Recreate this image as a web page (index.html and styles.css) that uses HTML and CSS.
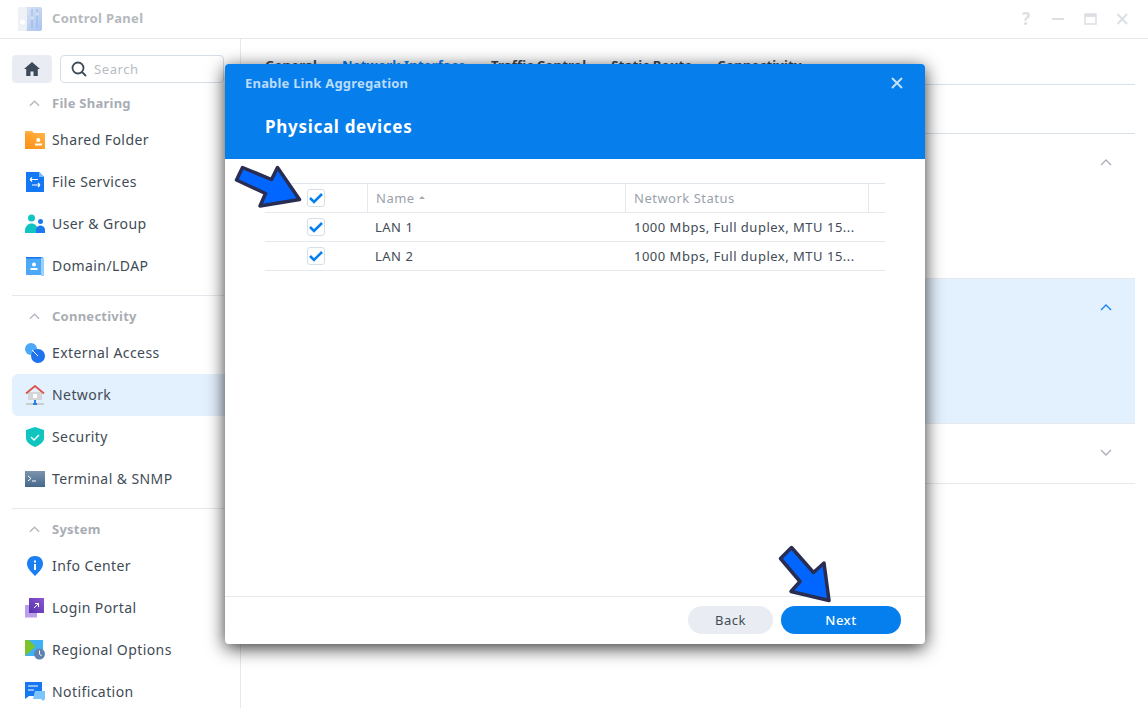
FILE: index.html
```html
<!DOCTYPE html>
<html lang="en">
<head>
<meta charset="utf-8">
<title>Control Panel</title>
<link rel="stylesheet" href="styles.css">
</head>
<body>
<div class="window">
  <header class="titlebar">
    <svg class="app-icon" width="24" height="24" viewBox="0 0 24 24">
      <defs><linearGradient id="ap" x1="0" y1="0" x2="1" y2="1"><stop offset="0" stop-color="#e3e9f3"/><stop offset="1" stop-color="#a9c3f0"/></linearGradient></defs>
      <rect x="0" y="0" width="24" height="24" rx="2" fill="url(#ap)"/>
      <rect x="0" y="0" width="9" height="24" rx="2" fill="#eef1f5"/>
      <path d="M14 2v19M19 2v19" stroke="#8fb6e8" stroke-width="1"/>
      <circle cx="14" cy="11" r="1.7" fill="#cfe0f7"/><circle cx="19" cy="7" r="1.7" fill="#cfe0f7"/>
      <circle cx="4.500" cy="15" r="2.500" fill="#fff"/>
    </svg>
    <span class="app-title">Control Panel</span>
    <div class="win-controls">
      <span class="win-help">?</span>
      <svg width="14" height="14" viewBox="0 0 14 14"><path d="M1 7h12" stroke="#dcdfe3" stroke-width="2"/></svg>
      <svg width="14" height="14" viewBox="0 0 14 14"><path d="M2 2h11v10H2z" fill="none" stroke="#dcdfe3" stroke-width="1.500"/><path d="M2 3.500h11" stroke="#dcdfe3" stroke-width="3"/></svg>
      <svg width="14" height="14" viewBox="0 0 14 14"><path d="M2.500 2l9.500 10M12 2L2.500 12" stroke="#dcdfe3" stroke-width="2"/></svg>
    </div>
  </header>
  <div class="body">
    <aside class="sidebar">
      <div class="side-top">
        <button class="home-btn">
          <svg width="16" height="14" viewBox="0 0 16 14"><path d="M8 0L0 7h2.200v7h4.300V9.500h3V14h4.300V7H16z" fill="#3e4a57"/></svg>
        </button>
        <div class="search">
          <svg width="16" height="16" viewBox="0 0 16 16"><circle cx="7" cy="7" r="5.500" fill="none" stroke="#3e4a57" stroke-width="1.800"/><path d="M11 11l4 4" stroke="#3e4a57" stroke-width="1.800"/></svg>
          <span>Search</span>
        </div>
      </div>
      <section class="group">
        <div class="group-head"><svg class="chev" width="14" height="8" viewBox="0 0 14 8"><path d="M2 7l5-5 5 5" fill="none" stroke="#b3b9c1" stroke-width="1.500"/></svg><span>File Sharing</span></div>
        <div class="item">
          <svg class="ico" width="20" height="20" viewBox="0 0 20 20"><defs><linearGradient id="fo" x1="1" y1="0" x2="0" y2="1"><stop offset="0" stop-color="#ffb347"/><stop offset="1" stop-color="#fd8f12"/></linearGradient></defs><path d="M0 1h7l2 2.500H0z" fill="#fbb24a"/><rect x="0" y="3" width="20" height="16" fill="url(#fo)"/><circle cx="13.300" cy="10" r="2" fill="#fff"/><path d="M10 15.500v-2h7v2z" fill="#fff"/></svg>
          <span>Shared Folder</span>
        </div>
        <div class="item">
          <svg class="ico" width="20" height="20" viewBox="0 0 20 20"><path d="M1 0h13l5 5v15H1z" fill="#1478f5"/><path d="M14 0l5 5h-5z" fill="#7cb8fb"/><path d="M5 7.500h8M5 7.500l2-2M5 7.500l2 2M15 13H7M15 13l-2-2M15 13l-2 2" stroke="#fff" stroke-width="1.100" fill="none"/></svg>
          <span>File Services</span>
        </div>
        <div class="item">
          <svg class="ico" width="20" height="20" viewBox="0 0 20 20"><circle cx="6.500" cy="4" r="3.500" fill="#12c4c1"/><path d="M0 17c0-10 13-10 13 0v2H0z" fill="#12c4c1"/><circle cx="15.500" cy="7.500" r="2.500" fill="#1e78f0"/><path d="M11 19v-3c0-6 9-6 9 0v3z" fill="#1e78f0"/></svg>
          <span>User &amp; Group</span>
        </div>
        <div class="item">
          <svg class="ico" width="20" height="20" viewBox="0 0 20 20"><rect x="1" y="1" width="17" height="18" fill="#4ba9f8"/><rect x="1" y="1" width="15" height="1.500" fill="#1b74e8"/><rect x="16" y="2" width="3" height="18" fill="#9ad0fb"/><circle cx="9" cy="8.500" r="2" fill="#fff"/><path d="M5.500 14v-2h7v2z" fill="#fff"/></svg>
          <span>Domain/LDAP</span>
        </div>
      </section>
      <section class="group">
        <div class="group-head"><svg class="chev" width="14" height="8" viewBox="0 0 14 8"><path d="M2 7l5-5 5 5" fill="none" stroke="#b3b9c1" stroke-width="1.500"/></svg><span>Connectivity</span></div>
        <div class="item">
          <svg class="ico" width="20" height="20" viewBox="0 0 20 20"><circle cx="6" cy="6" r="6" fill="#4ba9f8"/><circle cx="13" cy="13" r="7" fill="#1f72ee"/><path d="M7 7l6 6" stroke="#fff" stroke-width="1"/></svg>
          <span>External Access</span>
        </div>
        <div class="item active">
          <svg class="ico" width="20" height="20" viewBox="0 0 20 20"><path d="M3 7h14v8H3z" fill="#d3d5d8"/><path d="M1 8.500L10 1l9 7.500" fill="none" stroke="#d9534a" stroke-width="1.800"/><rect x="8" y="9" width="4" height="4" fill="#fff"/><path d="M10 15v3" stroke="#2d7fe0" stroke-width="2"/><rect x="1" y="18" width="18" height="2" fill="#c8cdd2"/><rect x="8" y="18" width="4" height="2" fill="#2d7fe0"/></svg>
          <span>Network</span>
        </div>
        <div class="item">
          <svg class="ico" width="20" height="20" viewBox="0 0 20 20"><path d="M10 0l9 3v8c0 4-4 7-9 9-5-2-9-5-9-9V3z" fill="#10c5bf"/><path d="M6 10l3 3 5-5" fill="none" stroke="#fff" stroke-width="1.400"/></svg>
          <span>Security</span>
        </div>
        <div class="item">
          <svg class="ico" width="20" height="16" viewBox="0 0 20 16"><defs><linearGradient id="tm" x1="0" y1="0" x2="0" y2="1"><stop offset="0" stop-color="#7d95ad"/><stop offset="1" stop-color="#44688d"/></linearGradient></defs><rect width="20" height="16" fill="url(#tm)"/><path d="M3 5l3 2.500L3 10M7 10h4" fill="none" stroke="#fff" stroke-width="1"/></svg>
          <span>Terminal &amp; SNMP</span>
        </div>
      </section>
      <section class="group">
        <div class="group-head"><svg class="chev" width="14" height="8" viewBox="0 0 14 8"><path d="M2 7l5-5 5 5" fill="none" stroke="#b3b9c1" stroke-width="1.500"/></svg><span>System</span></div>
        <div class="item">
          <svg class="ico" width="20" height="20" viewBox="0 0 20 20"><path d="M10 0c5 0 8 3.500 8 8 0 4-4 8-8 12-4-4-8-8-8-12 0-4.500 3-8 8-8z" fill="#1a7ff3"/><rect x="9" y="8" width="2" height="6" fill="#fff"/><rect x="9" y="4.500" width="2" height="2" fill="#fff"/></svg>
          <span>Info Center</span>
        </div>
        <div class="item">
          <svg class="ico" width="20" height="20" viewBox="0 0 20 20"><defs><linearGradient id="lp" x1="1" y1="0" x2="0" y2="1"><stop offset="0" stop-color="#8d57cf"/><stop offset="1" stop-color="#5531ae"/></linearGradient></defs><rect x="0" y="7" width="12" height="12.500" fill="#bb9fe8"/><rect x="4" y="0" width="15" height="15" fill="url(#lp)"/><path d="M9 10l4.500-4.500M10 5.500h3.500V9" fill="none" stroke="#fff" stroke-width="1"/></svg>
          <span>Login Portal</span>
        </div>
        <div class="item">
          <svg class="ico" width="20" height="20" viewBox="0 0 20 20"><rect width="18" height="16" y="0" fill="#3fb1f5"/><path d="M0 0h18L0 16z" fill="#7cc22a"/><path d="M4 0l9 9 5-6V0z" fill="#3fb1f5"/><circle cx="14.500" cy="14" r="5.500" fill="#6083ad"/><path d="M14.500 10.500V14l2 2" fill="none" stroke="#fff" stroke-width="1"/></svg>
          <span>Regional Options</span>
        </div>
        <div class="item">
          <svg class="ico" width="20" height="20" viewBox="0 0 20 20"><path d="M0 0h17v14H4l-4 3z" fill="#1677f0"/><path d="M3 4h10M3 8h6" stroke="#fff" stroke-width="1.200"/><path d="M10 9h10v8l-2 2-2-2h-8z" fill="#7cc4fb"/></svg>
          <span>Notification</span>
        </div>
      </section>
    </aside>
    <main class="content">
      <nav class="tabs">
        <span class="tab">General</span>
        <span class="tab current">Network Interface</span>
        <span class="tab">Traffic Control</span>
        <span class="tab">Static Route</span>
        <span class="tab">Connectivity</span>
      </nav>
      <div class="toolbar"></div>
      <div class="row row-a"><svg width="12" height="7" viewBox="0 0 12 7"><path d="M1 6l5-5 5 5" fill="none" stroke="#a9b0b9" stroke-width="1.400"/></svg></div>
      <div class="row row-b"><svg width="12" height="7" viewBox="0 0 12 7"><path d="M1 6l5-5 5 5" fill="none" stroke="#1a82f0" stroke-width="1.400"/></svg></div>
      <div class="row row-c"><svg width="12" height="7" viewBox="0 0 12 7"><path d="M1 1l5 5 5-5" fill="none" stroke="#a9b0b9" stroke-width="1.400"/></svg></div>
    </main>
  </div>
</div>

<div class="dialog">
  <div class="dlg-head">
    <div class="dlg-top">
      <span class="dlg-caption">Enable Link Aggregation</span>
      <svg width="12" height="12" viewBox="0 0 12 12"><path d="M1 1l10 10M11 1L1 11" stroke="#c4e0fb" stroke-width="2"/></svg>
    </div>
    <h1 class="dlg-title">Physical devices</h1>
  </div>
  <div class="dlg-body">
    <div class="grid">
      <div class="grid-row grid-header">
        <div class="c-check"><span class="cb"><svg width="14" height="12" viewBox="0 0 14 12"><path d="M1 6l4 4 8-8" fill="none" stroke="#057fee" stroke-width="2.500"/></svg></span></div>
        <div class="c-name">Name <i class="sort"></i></div>
        <div class="c-status">Network Status</div>
        <div class="c-rest"></div>
      </div>
      <div class="grid-row">
        <div class="c-check"><span class="cb"><svg width="14" height="12" viewBox="0 0 14 12"><path d="M1 6l4 4 8-8" fill="none" stroke="#057fee" stroke-width="2.500"/></svg></span></div>
        <div class="c-name">LAN 1</div>
        <div class="c-status">1000 Mbps, Full duplex, MTU 15...</div>
        <div class="c-rest"></div>
      </div>
      <div class="grid-row">
        <div class="c-check"><span class="cb"><svg width="14" height="12" viewBox="0 0 14 12"><path d="M1 6l4 4 8-8" fill="none" stroke="#057fee" stroke-width="2.500"/></svg></span></div>
        <div class="c-name">LAN 2</div>
        <div class="c-status">1000 Mbps, Full duplex, MTU 15...</div>
        <div class="c-rest"></div>
      </div>
    </div>
  </div>
  <div class="dlg-foot">
    <button class="btn btn-back">Back</button>
    <button class="btn btn-next">Next</button>
  </div>
</div>

<svg class="arrows" width="1148" height="708" viewBox="0 0 1148 708">
  <path d="M242.500 167.500L271.500 179.500L277.500 167.500L299.500 199.500L260 206L265.500 193.500L236.500 180Z" fill="#0066ff" stroke="#2a2d52" stroke-width="3.500" stroke-linejoin="round"/>
  <path d="M791.500 547.500L780.500 558.500L800 581.500L791 591.500L829 600.500L824 563L813.500 572.500Z" fill="#0066ff" stroke="#2a2d52" stroke-width="3.500" stroke-linejoin="round"/>
</svg>
</body>
</html>
```
FILE: styles.css
```css
* { box-sizing: border-box; }
html, body { margin: 0; height: 100%; }
body {
  width: 1148px; height: 708px; overflow: hidden; position: relative;
  background: #fff; color: #414b55;
  font-family: "Noto Sans", "DejaVu Sans", sans-serif; font-size: 14px;
  letter-spacing: .42px;
}
.window { display: flex; flex-direction: column; height: 708px; }
.titlebar {
  height: 39px; flex: none; display: flex; align-items: center;
  border-bottom: 1px solid #e5e9ee; padding: 0 19px 2px 18px;
}
.app-icon { margin-right: 10px; margin-top: 2px; }
.app-title { font-weight: 700; font-size: 13px; color: #b5b9be; letter-spacing: .3px; }
.win-controls { margin-left: auto; display: flex; align-items: center; gap: 18px; margin-top: 2px; }
.win-help { font-size: 17px; color: #dcdfe3; width: 14px; text-align: center; font-weight: 700; letter-spacing: 0; line-height: 14px; }
.body { flex: 1; display: flex; min-height: 0; }
.sidebar {
  width: 241px; flex: none; border-right: 1px solid #e5e9ee;
  padding: 16px 16px 0 12px; overflow: hidden;
}
.side-top { display: flex; gap: 8px; }
.home-btn {
  width: 40px; height: 28px; border: 0; border-radius: 4px; background: #e9edf3;
  display: flex; align-items: center; justify-content: center; padding: 0;
}
.search {
  flex: 1; height: 28px; border: 1px solid #d6dee6; border-radius: 4px;
  display: flex; align-items: center; gap: 7px; padding-left: 10px;
  color: #b6bcc3; font-size: 13px; letter-spacing: .6px;
}
.group { padding-top: 4px; margin-bottom: 8px; border-top: 1px solid #e5e9ee; }
.side-top + .group { border-top: 0; }
.group-head {
  height: 32px; display: flex; align-items: center;
  font-weight: 700; font-size: 13px; color: #a8adb4; letter-spacing: .25px;
}
.chev { margin: 0 11px 0 16px; width: 13px; }
.item {
  height: 42px; display: flex; align-items: center; border-radius: 6px;
  padding: 0 0 2px 13px; gap: 7px; color: #414b55;
}
.item .ico { flex: none; margin-top: 2px; }
.item.active { background: #e3f0fd; margin-right: -16px; }
.content { flex: 1; padding-right: 13px; min-width: 0; }
.tabs {
  height: 46px; display: flex; gap: 25px; padding: 17px 0 0 24px;
  border-bottom: 1px solid #d8e0e8; font-weight: 700; font-size: 13px; color: #3d4752; letter-spacing: .2px;
}
.tab.current { color: #057fee; }
.toolbar { height: 49px; border-bottom: 1px solid #d8e0e8; }
.row {
  display: flex; justify-content: flex-end; padding-right: 23px;
  border-bottom: 1px solid #e5e9ee;
}
.row-a { height: 145px; padding-top: 25px; }
.row-b { height: 145px; background: #e3f0fd; padding-top: 25px; }
.row-c { height: 60px; padding-top: 25px; }
.row svg { display: block; }

.dialog {
  position: absolute; left: 225px; top: 64px; width: 700px; height: 580px;
  background: #fff; border-radius: 4px;
  display: flex; flex-direction: column;
  box-shadow: 0 4px 18px rgba(0,0,0,.8);
}
.dlg-head {
  height: 95px; flex: none; background: #067eec; border-radius: 4px 4px 0 0;
  padding: 0 22px 0 20px;
}
.dlg-top { height: 39px; display: flex; align-items: center; justify-content: space-between; padding-bottom: 2px; }
.dlg-caption { font-weight: 700; font-size: 13px; color: #b9dcfb; letter-spacing: .2px; }
.dlg-title { margin: 12px 0 0 20px; font-size: 17px; font-weight: 700; color: #fff; line-height: 24px; letter-spacing: .7px; }
.dlg-body { flex: 1; padding: 24px 40px 0; }
.grid { border-top: 1px solid #e0e6ec; }
.grid-row {
  display: flex; height: 29px; align-items: center;
  border-bottom: 1px solid #e5e9ee; font-size: 13px; color: #414b55; letter-spacing: .5px;
}
.grid-header { color: #9aa1aa; }
.c-check { width: 102px; height: 100%; display: flex; align-items: center; padding-left: 42px; flex: none; }
.c-name { width: 258px; height: 100%; display: flex; align-items: center; padding-left: 8px; flex: none; gap: 4px; }
.c-status { width: 243px; height: 100%; display: flex; align-items: center; padding-left: 9px; flex: none; white-space: nowrap; }
.c-rest { flex: 1; height: 100%; }
.grid-header .c-name, .grid-header .c-status, .grid-header .c-rest { border-left: 1px solid #e5e9ee; }
.grid-header .c-status { padding-left: 8px; }
.cb {
  width: 18px; height: 18px; border: 1px solid #d6dee6; border-radius: 3px;
  display: flex; align-items: center; justify-content: center; background: #fff;
}
.sort { width: 0; height: 0; border: 3.500px solid transparent; border-bottom: 3.500px solid #a5abb3; margin-top: -4px; }
.dlg-foot {
  height: 48px; flex: none; border-top: 1px solid #e5e9ee;
  display: flex; justify-content: flex-end; gap: 8px; padding: 9px 24px 0 0;
}
.btn {
  height: 28px; border: 0; border-radius: 14px; font: inherit; font-size: 13px; padding: 0; letter-spacing: .5px;
}
.btn-back { width: 85px; background: #e9edf3; color: #414b55; }
.btn-next { width: 120px; background: #057fee; color: #fff; font-weight: 500; }
.arrows { position: absolute; left: 0; top: 0; pointer-events: none; }
```
